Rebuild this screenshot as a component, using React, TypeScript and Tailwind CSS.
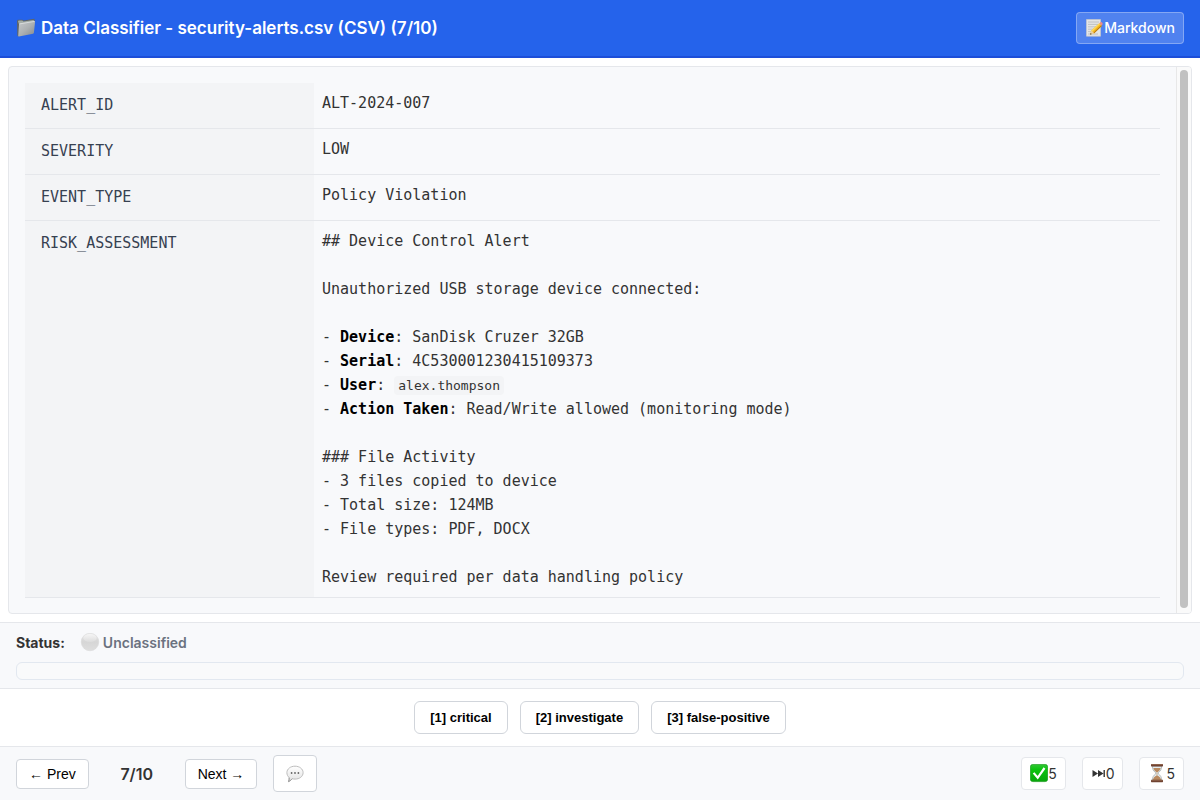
import type { ReactNode } from 'react';

function FolderIcon() {
  return (
    <svg width="20" height="20" viewBox="0 0 20 20" aria-hidden="true">
      <defs>
        <linearGradient id="folder" x1="0" y1="0" x2="1" y2="1">
          <stop offset="0" stopColor="#c6c9cb" />
          <stop offset="0.5" stopColor="#adb1b3" />
          <stop offset="1" stopColor="#85898c" />
        </linearGradient>
      </defs>
      <path d="M1 2.700 1.800 1.800h4.700l1.200.8 10.600-1.900.5 1.600-.4 3L2.500 18.400 1.300 17.600Z" fill="#606567" />
      <path d="M2 3.300 2.700 2.600h3.600l1.200.9 10.200-1.600.3 1.600L3 6.200Z" fill="#a3ada8" />
      <path d="m3.600 5.600 14.800-2.500c.5 0 .7.200.7.700l-1.200 11c-.1.500-.3.800-.8.900L2.900 18.500c-.5.1-.8-.2-.7-.7L3 6.500c0-.5.200-.8.600-.9Z" fill="url(#folder)" />
      <path d="m3.500 5.900 15-2.500" stroke="#e1e3e3" strokeWidth=".8" />
    </svg>
  );
}

function MemoIcon() {
  return (
    <svg width="18" height="20" viewBox="0 0 18 20" aria-hidden="true">
      <path d="M1.500 1.500h14v16.700h-14Z" fill="#e4e5e6" stroke="#c7c9cc" strokeWidth=".7" />
      <path d="M3 4h11M3 6.400h10M3 8.800h8M3 11.200h6M3 13.600h4M3 16h10" stroke="#b5b8bb" strokeWidth=".8" />
      <path d="m5.200 16.800 1.100-4.200 8-7.400 2.600 2.700-7.700 7.400Z" fill="#f5b921" />
      <path d="m6.300 12.600 8-7.400.9.900-8 7.600Z" fill="#ffd95a" />
      <path d="m8.400 14.800 7.800-7.600.7.700-7.700 7.400Z" fill="#b87414" />
      <path d="m14.200 5.300 1-.9c.7-.6 1.500-.4 2 .3.6.7.6 1.400.1 2l-.8.9Z" fill="#ef8d86" />
      <path d="m5.200 16.800 1.100-4.200 2.900 2.700Z" fill="#ebcfa0" />
      <path d="m5.200 16.800.4-1.700 1.100 1Z" fill="#343331" />
    </svg>
  );
}

function WhiteCircleIcon() {
  return (
    <svg width="20" height="20" viewBox="0 0 20 20" aria-hidden="true">
      <defs>
        <linearGradient id="ball" x1="0" y1="0" x2="0" y2="1">
          <stop offset="0" stopColor="#e6e6e6" />
          <stop offset="0.5" stopColor="#d6d6d6" />
          <stop offset="1" stopColor="#dedede" />
        </linearGradient>
        <linearGradient id="shine" x1="0" y1="0" x2="0" y2="1">
          <stop offset="0" stopColor="#f6f6f6" />
          <stop offset="1" stopColor="#dcdcdc" />
        </linearGradient>
      </defs>
      <circle cx="10" cy="9" r="8.800" fill="url(#ball)" stroke="#d9d9d9" strokeWidth=".5" />
      <ellipse cx="10" cy="5" rx="6.800" ry="4" fill="url(#shine)" />
    </svg>
  );
}

function SpeechIcon() {
  return (
    <svg width="18" height="18" viewBox="0 0 18 18" aria-hidden="true">
      <defs>
        <linearGradient id="speech" x1="0" y1="0" x2="0" y2="1">
          <stop offset="0" stopColor="#ffffff" />
          <stop offset="1" stopColor="#e2e2e2" />
        </linearGradient>
      </defs>
      <path d="M9 1.200c4.600 0 8.100 2.800 8.100 6.500s-3.500 6.400-8.100 6.400c-1 0-2-.1-2.900-.4-.6.8-1.800 2.300-3.600 2.900.5-1.100.8-2.500.7-4C1.700 11.500.9 9.700.9 7.700.9 4 4.400 1.200 9 1.200Z" fill="url(#speech)" stroke="#bdbdbd" strokeWidth="1" />
      <path d="M6.100 13.700c-.6.8-1.800 2.300-3.600 2.900.5-1.100.8-2.500.7-4" fill="none" stroke="#8f8f8f" strokeWidth=".8" />
      <circle cx="5.600" cy="8" r=".9" fill="#666" />
      <circle cx="9" cy="8" r=".9" fill="#666" />
      <circle cx="12.400" cy="8" r=".9" fill="#666" />
    </svg>
  );
}

function CheckIcon() {
  return (
    <svg width="18" height="20" viewBox="0 0 18 20" aria-hidden="true">
      <defs>
        <linearGradient id="check" x1="0" y1="0" x2="0" y2="1">
          <stop offset="0" stopColor="#31c634" />
          <stop offset="0.3" stopColor="#0cc30f" />
          <stop offset="1" stopColor="#08a60b" />
        </linearGradient>
      </defs>
      <rect x=".4" y=".4" width="17.200" height="17.200" rx="2.400" fill="url(#check)" stroke="#159a19" strokeWidth=".7" />
      <path d="m3.600 8.900 4.100 4.900L14.500 4" fill="none" stroke="#fff" strokeWidth="2.200" />
    </svg>
  );
}

function SkipIcon() {
  return (
    <svg width="15" height="12" viewBox="0 0 15 12" aria-hidden="true">
      <path d="M1.500 2 7 5.500 1.500 9ZM7 2l5.500 3.500L7 9ZM12.500 2h1.400v7h-1.400Z" fill="#333" />
    </svg>
  );
}

function HourglassIcon() {
  return (
    <svg width="18" height="22" viewBox="0 0 18 22" aria-hidden="true">
      <path d="M4.400 3h9.200c0 3.600-1 5-3.300 6.600v1.300c2.300 1.600 3.300 3 3.300 6.600H4.400c0-3.600 1-5 3.300-6.600V9.600C5.400 8 4.400 6.600 4.400 3Z" fill="#e5edef" stroke="#9da6a9" strokeWidth=".7" />
      <path d="M5.300 5h7.400c-.5 2-1.500 3-3.700 4.500C6.800 8 5.800 7 5.300 5ZM8.700 9h.6v3.600c2 .8 3.500 2.200 3.800 4.400H4.900c.3-2.200 1.800-3.600 3.800-4.400Z" fill="#b98a60" />
      <rect x="3" y="1" width="12" height="2.400" rx=".6" fill="#704332" />
      <rect x="3" y="16.800" width="12" height="2.400" rx=".6" fill="#704332" />
      <path d="M3.500 1.500h11M3.500 17.300h11" stroke="#a17359" strokeWidth=".6" />
    </svg>
  );
}

const assessment: ReactNode[] = [
  '## Device Control Alert',
  '',
  'Unauthorized USB storage device connected:',
  '',
  <>- <strong className="text-black">Device</strong>: SanDisk Cruzer 32GB</>,
  <>- <strong className="text-black">Serial</strong>: 4C530001230415109373</>,
  <>
    - <strong className="text-black">User</strong>:{' '}
    <code className="rounded-sm bg-[#f3f4f6] px-1 py-0.5 font-[DejaVu_Sans_Mono,monospace] text-[13px]">alex.thompson</code>
  </>,
  <>- <strong className="text-black">Action Taken</strong>: Read/Write allowed (monitoring mode)</>,
  '',
  '### File Activity',
  '- 3 files copied to device',
  '- Total size: 124MB',
  '- File types: PDF, DOCX',
  '',
  'Review required per data handling policy',
];

const rows: { label: string; lines: ReactNode[] }[] = [
  { label: 'ALERT_ID', lines: ['ALT-2024-007'] },
  { label: 'SEVERITY', lines: ['LOW'] },
  { label: 'EVENT_TYPE', lines: ['Policy Violation'] },
  { label: 'RISK_ASSESSMENT', lines: assessment },
];

const categories = ['[1] critical', '[2] investigate', '[3] false-positive'];

function Stat({ icon, count, label }: { icon: ReactNode; count: number; label: string }) {
  return (
    <span title={label} className="flex h-[33px] items-center rounded border border-[#e5e7eb] bg-white px-2">
      {icon}
      {count}
    </span>
  );
}

export default function App() {
  return (
    <div className="flex h-screen flex-col bg-white font-[Inter,sans-serif] text-[#333]">
      <header className="flex shrink-0 items-center justify-between border-b-2 border-[#1d4ed8] bg-[#2563eb] px-4 py-3 text-white">
        <h1 className="flex items-center gap-[5px] text-[17px] leading-6 font-semibold">
          <FolderIcon />
          Data Classifier - security-alerts.csv (CSV) (7/10)
        </h1>
        <button type="button" className="flex h-8 items-center gap-px rounded border border-white/30 bg-white/20 px-2 text-sm font-medium">
          <MemoIcon />
          Markdown
        </button>
      </header>

      <main className="m-2 flex min-h-0 flex-1 overflow-hidden rounded border border-[#e5e7eb] bg-[#f8f9fb]">
        <div className="min-w-0 flex-1 overflow-hidden p-4">
          <table className="w-full table-fixed border-collapse font-[DejaVu_Sans_Mono,monospace] text-[15px]">
            <colgroup>
              <col className="w-[289px]" />
              <col />
            </colgroup>
            <tbody>
              {rows.map((row) => (
                <tr key={row.label} className="border-b border-[#e5e7eb]">
                  <th scope="row" className="bg-[#f3f4f6] px-4 py-3 text-left align-top leading-[21px] font-normal text-[#374151]">
                    {row.label}
                  </th>
                  <td className="p-2 align-top leading-6">
                    {row.lines.map((line, i) => (
                      <div key={i} className="h-6">{line}</div>
                    ))}
                  </td>
                </tr>
              ))}
            </tbody>
          </table>
        </div>
        <div className="flex w-[15px] shrink-0 justify-center border-l border-[#e8e8e8] bg-[#fafafa] pt-[3px] pb-[5px]">
          <div className="w-2 rounded-full bg-[#c1c1c1]" />
        </div>
      </main>

      <section className="shrink-0 border-t border-[#e5e7eb] bg-[#f8f9fb] px-4 py-2">
        <div className="flex items-center gap-[15px] text-sm leading-[23px]">
          <span className="font-bold">Status:</span>
          <span className="flex items-center gap-[3px] font-semibold text-[#6b7280]">
            <WhiteCircleIcon />
            Unclassified
          </span>
        </div>
        <div className="mt-2 h-[18px] rounded-md border border-[#e2e8f0] bg-[#f9fafb]" />
      </section>

      <section className="flex shrink-0 justify-center gap-3 border-t border-[#e5e7eb] py-3 font-[Liberation_Sans,sans-serif] text-[13px] font-bold text-black">
        {categories.map((category) => (
          <button key={category} type="button" className="h-[33px] rounded-md border border-[#d1d5db] bg-white px-[15px]">
            {category}
          </button>
        ))}
      </section>

      <footer className="flex shrink-0 items-center justify-between border-t border-[#e5e7eb] bg-[#f8f9fb] px-4 py-2">
        <nav className="flex items-center gap-4">
          <button type="button" className="h-[30px] rounded border border-[#d1d5db] bg-white px-3 font-[Liberation_Sans,sans-serif] text-sm text-black">
            ← Prev
          </button>
          <span className="min-w-16 text-center text-base font-semibold">7/10</span>
          <button type="button" className="h-[30px] rounded border border-[#d1d5db] bg-white px-3 font-[Liberation_Sans,sans-serif] text-sm text-black">
            Next →
          </button>
          <button type="button" aria-label="Comment" className="flex h-[37px] w-11 items-center justify-center rounded border border-[#d1d5db] bg-white">
            <SpeechIcon />
          </button>
        </nav>
        <div className="flex items-center gap-4 text-sm">
          <Stat label="Classified" icon={<CheckIcon />} count={5} />
          <Stat label="Skipped" icon={<SkipIcon />} count={0} />
          <Stat label="Remaining" icon={<HourglassIcon />} count={5} />
        </div>
      </footer>
    </div>
  );
}
